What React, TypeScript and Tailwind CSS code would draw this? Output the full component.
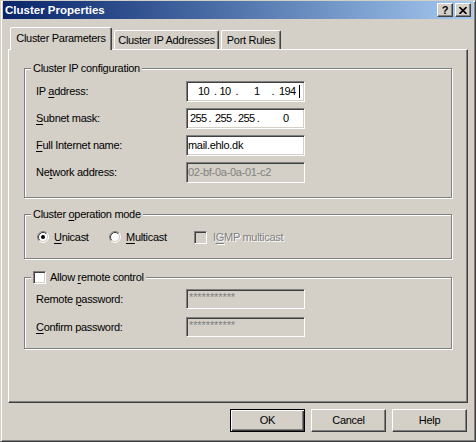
import React from "react";

const raised =
  "border border-t-white border-l-white border-r-[#404040] border-b-[#404040] shadow-[inset_-1px_-1px_0_#808080]";
const sunken =
  "border border-t-[#808080] border-l-[#808080] border-r-white border-b-white shadow-[inset_1px_1px_0_#404040,inset_-1px_-1px_0_#d4d0c8]";

function Acc({ c }: { c: string }) {
  return <span className="underline decoration-1 underline-offset-[2px]">{c}</span>;
}

function GroupBox({ label, className, children }: { label: React.ReactNode; className?: string; children?: React.ReactNode }) {
  return (
    <div className={`relative w-full border border-[#808080] shadow-[inset_1px_1px_0_#fff,1px_1px_0_#fff] ${className ?? ""}`}>
      <div className="absolute left-[6px] top-[-7px] flex h-[13px] items-center bg-[#d4d0c8] px-[2px] leading-[13px]">{label}</div>
      {children}
    </div>
  );
}

function Field({ children, disabled, h = 21 }: { children?: React.ReactNode; disabled?: boolean; h?: number }) {
  return (
    <div
      className={`flex w-[119px] items-center overflow-hidden whitespace-pre pl-px ${h === 21 ? "h-[21px]" : "h-[20px]"} ${sunken} ${
        disabled ? "bg-[#d4d0c8] text-[#808080]" : "bg-white text-black"
      }`}
    >
      {children}
    </div>
  );
}

function Radio({ checked }: { checked?: boolean }) {
  return (
    <svg width="12" height="12" viewBox="0 0 12 12" className="shrink-0">
      <circle cx="6" cy="6" r="4.5" fill="#fff" />
      <path d="M2.11 9.89 A5.5 5.5 0 0 1 9.89 2.11" stroke="#808080" fill="none" />
      <path d="M9.89 2.11 A5.5 5.5 0 0 1 2.11 9.89" stroke="#fff" fill="none" />
      <path d="M2.82 9.18 A4.5 4.5 0 0 1 9.18 2.82" stroke="#404040" fill="none" />
      <path d="M9.18 2.82 A4.5 4.5 0 0 1 2.82 9.18" stroke="#d4d0c8" fill="none" />
      {checked && <circle cx="6" cy="6" r="2" fill="#000" />}
    </svg>
  );
}

function Check({ disabled }: { disabled?: boolean }) {
  return <div className={`h-[13px] w-[13px] shrink-0 ${sunken} ${disabled ? "bg-[#d4d0c8]" : "bg-white"}`} />;
}

function Button({ label, isDefault }: { label: string; isDefault?: boolean }) {
  return (
    <div
      className={`flex h-[23px] w-[75px] items-center justify-center ${
        isDefault
          ? "border border-black shadow-[inset_1px_1px_0_#fff,inset_-1px_-1px_0_#404040,inset_-2px_-2px_0_#808080]"
          : raised
      }`}
    >
      {label}
    </div>
  );
}

// address control segments: [text, left gap]
const ipTokens: [string, string][] = [
  ["10", "ml-[10px]"],
  [".", "ml-[5px]"],
  ["10", "ml-[3px]"],
  [".", "ml-[5px]"],
  ["1", "ml-[16px]"],
  [".", "ml-[12px]"],
  ["194", "ml-[5px]"],
];

const maskTokens: [string, string][] = [
  ["255", "ml-[2px]"],
  [".", "ml-[2px]"],
  ["255", "ml-[4px]"],
  [".", "ml-[2px]"],
  ["255", "ml-[2px]"],
  [".", "ml-[2px]"],
  ["0", "ml-[24px]"],
];

export default function App() {
  return (
    <div className="h-[442px] w-[476px] overflow-hidden bg-[#d4d0c8] font-['Liberation_Sans',Arial,sans-serif] text-[11px] leading-[13px] tracking-[-0.3px] text-black">
      <div className="flex h-[442px] w-[476px] flex-col border border-t-[#d4d0c8] border-l-[#d4d0c8] border-r-[#404040] border-b-[#404040] px-[2px] shadow-[inset_1px_1px_0_#fff,inset_-1px_-1px_0_#808080]">
        {/* title bar */}
        <div className="flex h-[18px] shrink-0 items-center bg-gradient-to-r from-[#0a246a] to-[#a6caf0] pl-[2px] pr-[2px]">
          <span className="flex-1 text-[11.5px] font-bold tracking-normal text-white">Cluster Properties</span>
          <div className="flex gap-[2px]">
            <div className={`flex h-[14px] w-[16px] items-center justify-center bg-[#d4d0c8] text-[11px] font-bold leading-none ${raised}`}>?</div>
            <div className={`flex h-[14px] w-[16px] items-center justify-center bg-[#d4d0c8] ${raised}`}>
              <svg width="8" height="7" viewBox="0 0 8 7">
                <path d="M0.5 0 L7.5 7 M7.5 0 L0.5 7" stroke="#000" strokeWidth="1.6" />
              </svg>
            </div>
          </div>
        </div>

        {/* tabs */}
        <div className="ml-[7px] mt-[8px] flex h-[22px] shrink-0 items-end">
          <div className="relative z-10 -mb-px flex h-[23px] w-[102px] items-center justify-center rounded-t-[2px] border-t border-l border-r border-t-white border-l-white border-r-[#404040] bg-[#d4d0c8] pb-[2px] shadow-[inset_-1px_0_0_#808080]">
            Cluster Parameters
          </div>
          <div className="ml-[2px] flex h-[19px] w-[105px] items-center justify-center rounded-t-[2px] border-t border-l border-r border-t-white border-l-white border-r-[#404040] shadow-[inset_-1px_0_0_#808080]">
            Cluster IP Addresses
          </div>
          <div className="ml-[2px] flex h-[19px] w-[60px] items-center justify-center rounded-t-[2px] border-t border-l border-r border-t-white border-l-white border-r-[#404040] shadow-[inset_-1px_0_0_#808080]">
            Port Rules
          </div>
        </div>

        {/* panel */}
        <div className={`ml-[5px] flex h-[354px] w-[460px] shrink-0 flex-col px-[15px] pt-[18px] ${raised}`}>
          <GroupBox label="Cluster IP configuration" className="h-[130px]">
            <div className="flex flex-col gap-[6px] pl-[11px] pt-[12px]">
              <div className="flex items-center">
                <span className="w-[150px]">
                  IP <Acc c="a" />ddress:
                </span>
                <Field>
                  {ipTokens.map(([t, m], i) => (
                    <span key={i} className={`${m} tracking-[-0.6px]`}>
                      {t}
                    </span>
                  ))}
                  <span className="ml-[3px] h-[13px] w-px bg-black" />
                </Field>
              </div>
              <div className="flex items-center">
                <span className="w-[150px]">
                  <Acc c="S" />ubnet mask:
                </span>
                <Field>
                  {maskTokens.map(([t, m], i) => (
                    <span key={i} className={`${m} tracking-[-0.6px]`}>
                      {t}
                    </span>
                  ))}
                </Field>
              </div>
              <div className="flex items-center">
                <span className="w-[150px]">
                  <Acc c="F" />ull Internet name:
                </span>
                <Field>mail.ehlo.dk</Field>
              </div>
              <div className="flex items-center">
                <span className="w-[150px]">
                  Ne<Acc c="t" />work address:
                </span>
                <Field disabled>02-bf-0a-0a-01-c2</Field>
              </div>
            </div>
          </GroupBox>

          <GroupBox
            label={
              <span>
                Cluster <Acc c="o" />peration mode
              </span>
            }
            className="mt-[16px] h-[45px]"
          >
            <div className="mt-[15px] flex h-[14px] items-center pl-[12px]">
              <div className="flex w-[72px] items-center gap-[5px]">
                <Radio checked />
                <span>
                  <Acc c="U" />nicast
                </span>
              </div>
              <div className="flex w-[85px] items-center gap-[5px]">
                <Radio />
                <span>
                  <Acc c="M" />ulticast
                </span>
              </div>
              <div className="flex items-center gap-[6px]">
                <Check disabled />
                <span className="text-[#808080] [text-shadow:1px_1px_0_#fff]">
                  I<Acc c="G" />MP multicast
                </span>
              </div>
            </div>
          </GroupBox>

          <GroupBox
            label={
              <span className="flex items-center gap-[4px]">
                <Check />
                <span>
                  Allow <Acc c="r" />emote control
                </span>
              </span>
            }
            className="mt-[18px] h-[72px]"
          >
            <div className="flex flex-col gap-[8px] pl-[11px] pt-[11px]">
              <div className="flex items-center">
                <span className="w-[150px]">
                  Remote <Acc c="p" />assword:
                </span>
                <Field disabled h={20}>
                  <span className="-mt-[3px] ml-[1px] tracking-[-0.1px]">***********</span>
                </Field>
              </div>
              <div className="flex items-center">
                <span className="w-[150px]">
                  <Acc c="C" />onfirm password:
                </span>
                <Field disabled h={20}>
                  <span className="-mt-[3px] ml-[1px] tracking-[-0.1px]">***********</span>
                </Field>
              </div>
            </div>
          </GroupBox>
        </div>

        {/* buttons */}
        <div className="mt-[6px] flex shrink-0 justify-end gap-[6px] pr-[6px]">
          <Button label="OK" isDefault />
          <Button label="Cancel" />
          <Button label="Help" />
        </div>
      </div>
    </div>
  );
}
